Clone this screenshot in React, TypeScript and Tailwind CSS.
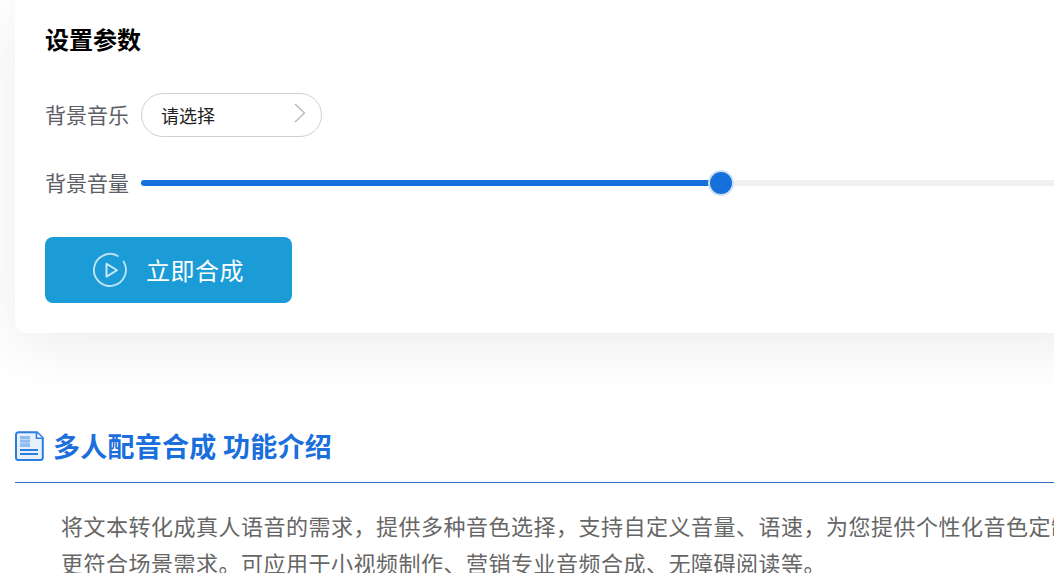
const font = "font-['Microsoft_YaHei','Noto_Sans_CJK_SC',sans-serif]";

function PlayIcon() {
  return (
    <svg width="36" height="36" viewBox="0 0 36 36" fill="none">
      <path d="M31.600 9.600A16 16 0 1 1 25.800 4" stroke="#bfe2f5" strokeWidth="1.900" strokeLinecap="round" />
      <path d="M14.500 11.800v12.800l10.500-6.400z" stroke="#cfe8f6" strokeWidth="1.900" strokeLinejoin="round" />
    </svg>
  );
}

function DocIcon() {
  return (
    <svg width="29" height="30" viewBox="0 0 29 30" fill="none">
      <path
        d="M3.500 1.200h18.500l5.800 5.800v19.500a2.500 2.500 0 0 1-2.500 2.500h-21.800A2.500 2.500 0 0 1 1 26.500v-22.800A2.500 2.500 0 0 1 3.500 1.200z"
        fill="#e6f0fb"
        stroke="#2a7ee0"
        strokeWidth="2"
      />
      <path d="M21.500 1.500v5.800h6" fill="#fff" stroke="#2a7ee0" strokeWidth="1.600" />
      <path d="M5 5h10v11H5z" fill="#8dbcf0" />
      <path d="M5 8.500h10M5 12h10" stroke="#bcd8f6" strokeWidth="1" />
      <path d="M5 19h18M5 23h18" stroke="#2a7ee0" strokeWidth="1.800" />
    </svg>
  );
}

export default function App() {
  return (
    <div className={`h-[573px] w-[1054px] overflow-hidden bg-white ${font}`}>
      <div className="ml-[15px] w-[1100px] rounded-b-[12px] bg-white pl-[30px] pt-[22px] pb-[30px] shadow-[0_12px_60px_rgba(0,0,0,0.08)]">
        <p className="text-[24px] leading-[34px] font-bold text-black">设置参数</p>

        <div className="mt-[37px] flex items-center">
          <span className="w-[96px] text-[21px] text-[#5c6066]">背景音乐</span>
          <div className="flex h-[44px] w-[181px] items-center justify-between rounded-full border border-[#d0d0d0] pl-[19px] pr-[14px]">
            <span className="text-[18px] text-[#222]">请选择</span>
            <svg width="14" height="22" viewBox="0 0 14 22" fill="none" className="-mt-[4px]">
              <path d="M2 2l9.500 9L2 20" stroke="#b5b5b5" strokeWidth="1.300" />
            </svg>
          </div>
        </div>

        <div className="mt-[30px] flex items-center">
          <span className="w-[96px] text-[21px] text-[#5c6066]">背景音量</span>
          <div className="relative h-[6px] flex-1 rounded-full bg-[#f0f0f0]">
            <div className="h-full w-[579px] rounded-full bg-[#1570dc]" />
            <div className="absolute left-[567px] top-[-10px] h-[26px] w-[26px] rounded-full border-2 border-[#cfe0f5] bg-[#1570dc]" />
          </div>
        </div>

        <button className="mt-[38px] flex h-[66px] w-[247px] items-center rounded-[8px] bg-[#1b9cd6] pl-[47px] text-white">
          <PlayIcon />
          <span className="ml-[18px] text-[24px] tracking-[0.5px]">立即合成</span>
        </button>
      </div>

      <div className="ml-[15px] mt-[93px]">
        <div className="flex items-center pb-[16px] border-b border-[#2f6fbd]">
          <DocIcon />
          <h2 className="ml-[9px] text-[27px] leading-[40px] font-bold tracking-[0.25px] text-[#1a6fdc]">多人配音合成 功能介绍</h2>
        </div>
        <div className="mt-[24px] w-[1100px] pl-[46px] text-[22px] leading-[37px] tracking-[0.5px] text-[#666]">
          <p className="whitespace-nowrap">将文本转化成真人语音的需求，提供多种音色选择，支持自定义音量、语速，为您提供个性化音色定制</p>
          <p className="whitespace-nowrap">更符合场景需求。可应用于小视频制作、营销专业音频合成、无障碍阅读等。</p>
        </div>
      </div>
    </div>
  );
}
